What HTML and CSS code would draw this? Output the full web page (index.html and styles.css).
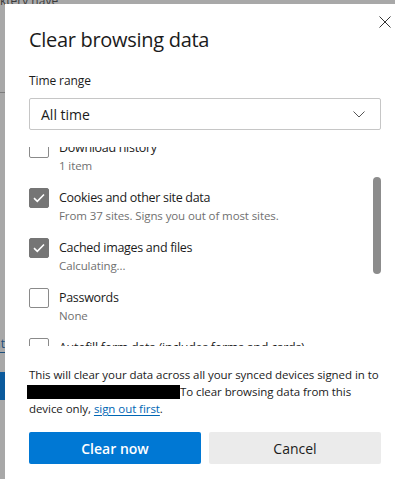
FILE: index.html
```html
<!DOCTYPE html>
<html lang="en">
<head>
  <meta charset="UTF-8"/>
  <meta name="viewport" content="width=device-width, initial-scale=1.0"/>
  <title>Clear browsing data</title>
  <link rel="stylesheet" href="styles.css">
</head>
<body>
  <div class="backdrop">
    <span class="bd-text">ktery have</span>
    <div class="bd-rule"></div>
    <span class="bd-link">at</span>
    <div class="bd-button"></div>
  </div>

  <div class="dialog">
    <button class="close" aria-label="Close">
      <svg viewBox="0 0 12 12" width="12" height="12">
        <path d="M0.5 0.5 L11.5 11.5 M11.5 0.5 L0.5 11.5" stroke="#333" stroke-width="1" fill="none"/>
      </svg>
    </button>

    <h1 class="title">Clear browsing data</h1>

    <div class="field-label">Time range</div>
    <div class="select">
      <span>All time</span>
      <svg viewBox="0 0 12 7" width="12" height="7">
        <path d="M0.5 0.5 L6 6 L11.5 0.5" stroke="#555" stroke-width="1" fill="none"/>
      </svg>
    </div>

    <div class="list-wrap">
      <div class="list">
        <div class="item">
          <span class="check"></span>
          <div class="item-text">
            <div class="item-title">Download history</div>
            <div class="item-sub">1 item</div>
          </div>
        </div>
        <div class="item">
          <span class="check checked">
            <svg viewBox="0 0 12 10" width="12" height="10"><path d="M1 5.2 L4.3 8.3 L11 1.5" stroke="#fff" stroke-width="1.6" fill="none"/></svg>
          </span>
          <div class="item-text">
            <div class="item-title">Cookies and other site data</div>
            <div class="item-sub">From 37 sites. Signs you out of most sites.</div>
          </div>
        </div>
        <div class="item">
          <span class="check checked">
            <svg viewBox="0 0 12 10" width="12" height="10"><path d="M1 5.2 L4.3 8.3 L11 1.5" stroke="#fff" stroke-width="1.6" fill="none"/></svg>
          </span>
          <div class="item-text">
            <div class="item-title">Cached images and files</div>
            <div class="item-sub">Calculating...</div>
          </div>
        </div>
        <div class="item">
          <span class="check"></span>
          <div class="item-text">
            <div class="item-title">Passwords</div>
            <div class="item-sub">None</div>
          </div>
        </div>
        <div class="item">
          <span class="check"></span>
          <div class="item-text">
            <div class="item-title">Autofill form data (includes forms and cards)</div>
            <div class="item-sub">None</div>
          </div>
        </div>
      </div>
      <div class="scroll-thumb"></div>
    </div>

    <p class="note">
      This will clear your data across all your synced devices signed in to
      <span class="redacted"></span>To clear browsing data from this
      device only, <a href="#">sign out first</a>.
    </p>

    <div class="actions">
      <button class="btn primary">Clear now</button>
      <button class="btn">Cancel</button>
    </div>
  </div>
</body>
</html>
```

FILE: styles.css
```css
* {
  margin: 0;
  padding: 0;
  box-sizing: border-box;
}
body {
  width: 395px;
  height: 479px;
  overflow: hidden;
  background: #a8a8a8;
  font-family: "Segoe UI", "Open Sans", sans-serif;
  color: #1b1b1b;
  position: relative;
}
.backdrop {
  position: absolute;
  top: 0;
  left: 0;
  width: 100%;
  height: 100%;
}
.bd-text {
  position: absolute;
  top: -8px;
  left: 0;
  font-size: 12px;
  color: #3c3c3c;
  white-space: nowrap;
}
.bd-rule {
  position: absolute;
  top: 92px;
  left: 0;
  width: 5px;
  height: 1px;
  background: #7d7d7d;
}
.bd-link {
  position: absolute;
  top: 335px;
  left: -6px;
  font-size: 12px;
  color: #1d4f7c;
  border-bottom: 1px solid #1d4f7c;
}
.bd-button {
  position: absolute;
  top: 372px;
  left: 0;
  width: 5px;
  height: 28px;
  background: #0b5a9c;
}
.dialog {
  position: relative;
  margin: 4px 0 0 5px;
  width: 390px;
  height: 475px;
  background: #fff;
  padding: 23px 14px 0 24px;
}
.close {
  position: absolute;
  top: 12px;
  right: 4px;
  width: 12px;
  height: 12px;
  border: none;
  background: none;
  display: flex;
}
.title {
  font-size: 20px;
  font-weight: 400;
  line-height: 26px;
  letter-spacing: -0.3px;
  color: #1b1b1b;
}
.field-label {
  margin-top: 19px;
  font-size: 12px;
  line-height: 18px;
  letter-spacing: -0.1px;
}
.select {
  margin-top: 8px;
  height: 32px;
  border: 1px solid #c6c6c6;
  border-radius: 2px;
  display: flex;
  align-items: center;
  justify-content: space-between;
  padding: 0 15px 0 11px;
  font-size: 14px;
}
.list-wrap {
  position: relative;
  margin-top: 17px;
  height: 199px;
  overflow: hidden;
}
.list {
  margin-top: -9px;
}
.item {
  display: flex;
  gap: 10px;
  height: 50px;
}
.check {
  flex: none;
  width: 20px;
  height: 20px;
  border: 1px solid #8a8a8a;
  border-radius: 2px;
  display: flex;
  align-items: center;
  justify-content: center;
}
.check.checked {
  background: #757575;
  border-color: #757575;
}
.item-title {
  font-size: 12.5px;
  line-height: 20px;
  letter-spacing: -0.3px;
  white-space: nowrap;
}
.item-sub {
  font-size: 11.5px;
  line-height: 16px;
  letter-spacing: -0.1px;
  color: #707070;
}
.scroll-thumb {
  position: absolute;
  top: 30px;
  right: 0;
  width: 8px;
  height: 97px;
  border-radius: 4px;
  background: #8c8c8c;
}
.note {
  margin-top: 20px;
  font-size: 11.5px;
  line-height: 17px;
  letter-spacing: -0.06px;
  color: #1b1b1b;
}
.redacted {
  display: inline-block;
  width: 153px;
  height: 14px;
  margin-left: -2px;
  vertical-align: -3px;
  background: #000;
}
.note a {
  color: #0066b4;
  text-decoration: underline;
  text-underline-offset: 2px;
}
.actions {
  margin-top: 15px;
  display: flex;
  gap: 8px;
}
.btn {
  flex: 1;
  height: 32px;
  border: none;
  border-radius: 2px;
  background: #ebebeb;
  color: #1b1b1b;
  font-family: inherit;
  font-size: 14px;
}
.btn.primary {
  background: #0078d4;
  color: #fff;
  font-weight: 600;
}
```
